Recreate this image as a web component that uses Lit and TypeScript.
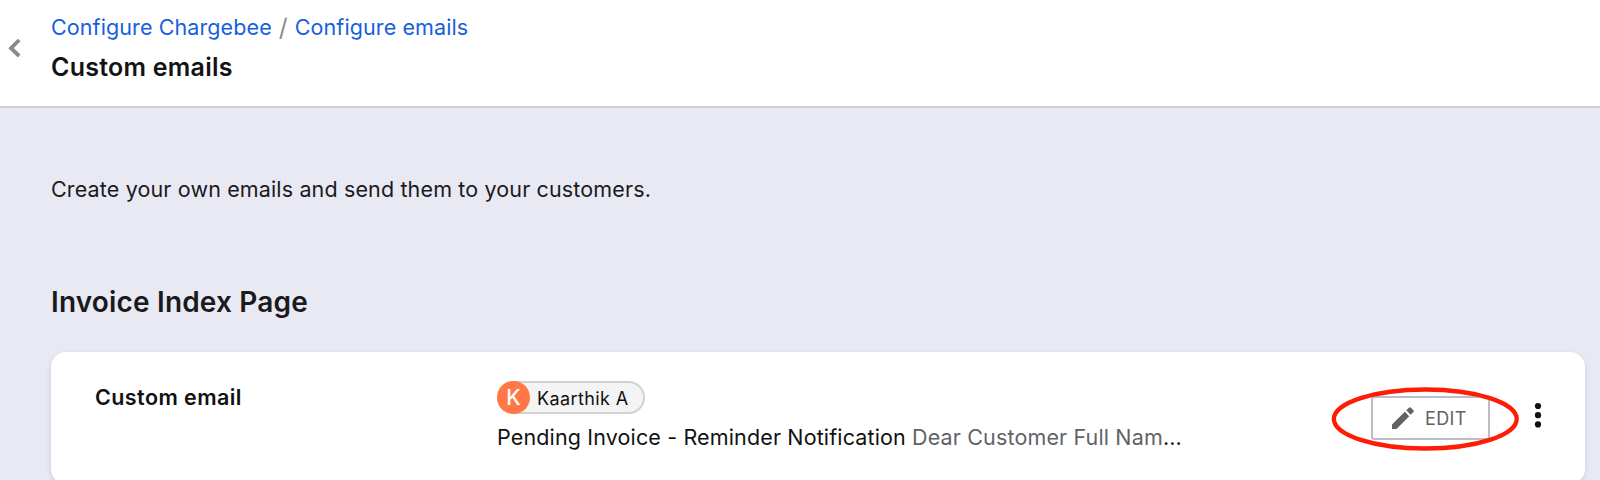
import { LitElement, html, css } from "lit";
import { customElement } from "lit/decorators.js";

@customElement("page-header")
class PageHeader extends LitElement {
  static styles = css`
    :host { display: block; }
    .bar { box-sizing: border-box; height: 108px; display: flex; background: #fff; border-bottom: 2px solid #cdcdd1; }
    .back { width: 51px; flex: none; box-sizing: border-box; padding: 38px 0 0 8px; }
    .back svg { display: block; }
    .titles { display: flex; flex-direction: column; padding-top: 12px; }
    .crumbs { display: flex; font-size: 21.5px; line-height: 30px; white-space: pre; letter-spacing: 0.1px; }
    .link { color: #1760dc; text-decoration: none; }
    .sep { color: #8b8b8f; width: 23px; text-align: center; letter-spacing: 0; font-size: 24.5px; }
    .title { margin: 8px 0 0; font-size: 25px; line-height: 34px; font-weight: 600; color: #131315; white-space: nowrap; letter-spacing: 0.25px; }
  `;
  render() {
    return html`
      <header class="bar">
        <div class="back">
          <svg width="14" height="20" viewBox="0 0 14 20" fill="none" stroke="#8a8a8d" stroke-width="3.8"><path d="M11.2 2 L3 10.2 L11.2 18"/></svg>
        </div>
        <div class="titles">
          <nav class="crumbs"><a class="link">Configure Chargebee</a><span class="sep">/</span><a class="link">Configure emails</a></nav>
          <h1 class="title">Custom emails</h1>
        </div>
      </header>`;
  }
}

@customElement("email-card")
class EmailCard extends LitElement {
  static styles = css`
    :host { display: block; }
    .card { box-sizing: border-box; height: 132px; display: flex; background: #fff; border-radius: 15px; box-shadow: 0 2px 5px rgba(60, 60, 110, 0.17); }
    .name { width: 402px; padding: 30px 0 0 44px; flex: none; font-size: 21.5px; line-height: 30px; font-weight: 600; color: #111; white-space: nowrap; letter-spacing: 0.42px; }
    .detail { width: 785px; flex: none; padding-top: 29px; }
    .chip { box-sizing: border-box; width: 148px; height: 33px; display: flex; align-items: center; border: 2px solid #d2d2d2; border-radius: 17px; background: #f4f4f4; font-size: 18px; color: #111; white-space: nowrap; letter-spacing: 0.4px; }
    .avatar { width: 33px; height: 33px; margin: 0 7px 0 -2px; flex: none; border-radius: 50%; background: #ff7846; color: #fff; font-size: 21px; font-weight: 500; line-height: 33px; text-align: center; letter-spacing: 0; }
    .person { padding-top: 2px; }
    .subject { margin-top: 8px; font-size: 21.5px; line-height: 30px; color: #111; white-space: nowrap; letter-spacing: 0.14px; }
    .preview { color: #626266; }
    .actions { position: relative; display: flex; align-items: flex-start; padding-top: 44px; }
    .edit { box-sizing: border-box; width: 119px; height: 44px; margin-left: 89px; display: flex; align-items: center; border: 2px solid #bdbdc8; border-radius: 3px; background: #fff; padding: 0 0 0 19px; font: 400 18px Inter, sans-serif; color: #626266; gap: 11px; letter-spacing: 0.4px; }
    .edit svg { flex: none; display: block; }
    .label { padding-top: 1px; }
    .more { margin: 6px 0 0 44px; display: block; }
    .ring { position: absolute; left: 49px; top: 34px; display: block; }
  `;
  render() {
    return html`
      <article class="card">
        <div class="name">Custom email</div>
        <div class="detail">
          <div class="chip"><span class="avatar">K</span><span class="person">Kaarthik A</span></div>
          <div class="subject"><span class="lead">Pending Invoice - Reminder Notification</span> <span class="preview">Dear Customer Full Nam</span>...</div>
        </div>
        <div class="actions">
          <button class="edit">
            <svg width="22" height="22" viewBox="0 0 22 22" fill="#626266"><path d="M0 17.5 L12.8 4.8 L17.2 9.2 L4.5 22 H0 Z M14.3 3.3 L17.2 .4 Q17.9 -.1 18.6 .4 L21.6 3.4 Q22.2 4.1 21.6 4.8 L18.7 7.7 Z"/></svg>
            <span class="label">EDIT</span>
          </button>
          <svg class="more" width="8" height="28" viewBox="0 0 8 28" fill="#111"><circle cx="4" cy="4" r="3.1"/><circle cx="4" cy="13.2" r="3.1"/><circle cx="4" cy="22.4" r="3.1"/></svg>
          <svg class="ring" width="188" height="66" viewBox="0 0 188 66" fill="none" stroke="#ff1c05" stroke-width="4.3"><ellipse cx="94.3" cy="33" rx="91.4" ry="29.5"/></svg>
        </div>
      </article>`;
  }
}

@customElement("app-root")
class AppRoot extends LitElement {
  static styles = css`
    :host { display: block; height: 480px; overflow: hidden; background: #e9e9f4; font-family: Inter, sans-serif; }
    .content { display: flex; flex-direction: column; padding: 66px 15px 0 51px; }
    .intro { margin: 0; font-size: 21.5px; line-height: 30px; color: #1a1a1c; white-space: nowrap; letter-spacing: 0.14px; }
    .section { margin: 79px 0 31px; font-size: 28px; line-height: 38px; font-weight: 600; color: #1a1a1c; white-space: nowrap; letter-spacing: 0.17px; }
  `;
  render() {
    return html`
      <page-header></page-header>
      <main class="content">
        <p class="intro">Create your own emails and send them to your customers.</p>
        <h2 class="section">Invoice Index Page</h2>
        <email-card></email-card>
      </main>`;
  }
}
